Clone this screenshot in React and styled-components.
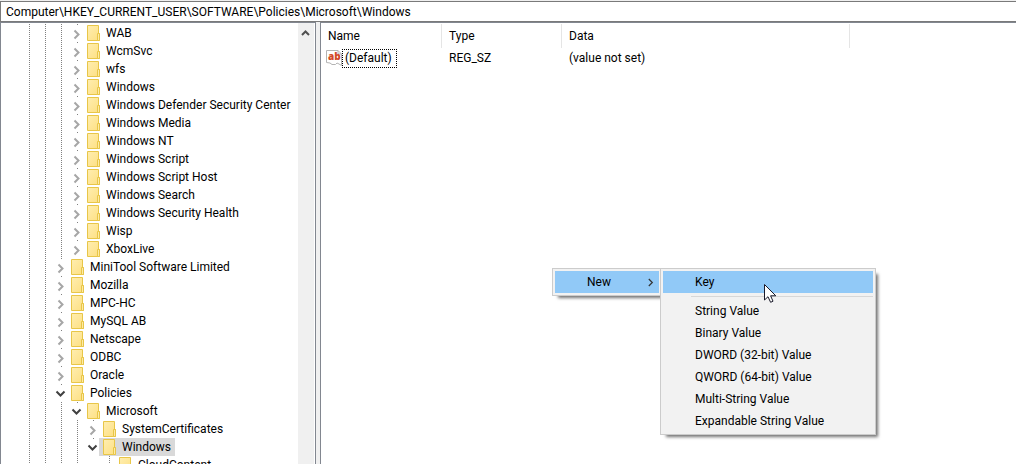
import React from "react";
import styled, { createGlobalStyle } from "styled-components";

const GlobalStyle = createGlobalStyle`
  * {
    box-sizing: border-box;
  }
  body {
    margin: 0;
    background: #fff;
    color: #000;
    font-family: Roboto, "Open Sans", sans-serif;
    font-size: 12px;
    line-height: 18px;
  }
  button,
  input {
    font: inherit;
    color: inherit;
  }
`;

const Window = styled.main`
  position: relative;
  display: flex;
  flex-direction: column;
  height: 100vh;
  overflow: hidden;
  background: #f0f0f0;
`;

const AddressBar = styled.input`
  flex: none;
  width: 100%;
  height: 21px;
  margin: 1px 0 0;
  padding: 0 5px;
  background: #fff;
  border: 1px solid #7a7a7a;
  border-right: 0;
  outline: none;
`;

const Panes = styled.div`
  display: flex;
  flex: 1;
  gap: 4px;
  min-height: 0;
`;

const TreePane = styled.nav`
  display: flex;
  flex: none;
  width: 316px;
  background: #fff;
  border: 1px solid #828790;
  border-bottom: 0;
`;

const Tree = styled.ul`
  flex: 1;
  min-width: 0;
  margin: 0;
  padding: 1px 0 0 20px;
  overflow: hidden;
  list-style: none;
`;

const TreeRow = styled.li`
  display: flex;
  height: 18px;
`;

const Guide = styled.span`
  flex: none;
  width: 16px;
  background: ${(props) =>
    props.$line
      ? "repeating-linear-gradient(#808080 0 1px, transparent 1px 2px) 8px 0 / 1px 100% no-repeat"
      : "none"};
`;

const Expander = styled.button`
  display: flex;
  flex: none;
  justify-content: center;
  width: 16px;
  height: 18px;
  padding: 0;
  border: 0;
  color: ${(props) => (props.$open ? "#404040" : "#a6a6a6")};
  background: linear-gradient(#808080, #808080) 8px 0 / 1px 1px no-repeat;
`;

const Folder = styled.a`
  display: flex;
  align-items: center;
  gap: 6px;
  margin-left: -2px;
  padding: 0 4px;
  color: inherit;
  text-decoration: none;
  white-space: nowrap;
  background: ${(props) => (props.$selected ? "#d9d9d9" : "transparent")};
`;

const ScrollBar = styled.div`
  flex: none;
  width: 17px;
  background: #f0f0f0;
  border-right: 1px solid #fff;
`;

const ScrollButton = styled.button`
  display: flex;
  align-items: center;
  justify-content: center;
  width: 15px;
  height: 19px;
  padding: 0;
  border: 0;
  background: none;
`;

const ListPane = styled.section`
  flex: 1;
  min-width: 0;
  background: #fff;
  border: 1px solid #828790;
  border-width: 1px 0 0 1px;
`;

const ValueTable = styled.table`
  margin-top: 1px;
  border-spacing: 0;
  table-layout: fixed;
  width: 529px;
`;

const HeadCell = styled.th`
  width: ${(props) => props.$width}px;
  height: 24px;
  padding: 0 0 0 7px;
  text-align: left;
  font-weight: 400;
  border-right: 1px solid #e5e5e5;
`;

const Cell = styled.td`
  height: 20px;
  padding: ${(props) => (props.$icon ? "0 0 0 5px" : "0 0 0 7px")};
`;

const ValueName = styled.div`
  display: flex;
  align-items: center;
`;

const FocusLabel = styled.span`
  padding: 0 4px 0 2px;
  line-height: 17px;
  border: 1px dotted #000;
`;

const Menu = styled.div`
  position: absolute;
  top: 268px;
  left: ${(props) => props.$left}px;
  width: ${(props) => props.$width}px;
  padding: 2px;
  background: #f2f2f2;
  border: 1px solid #ccc;
  box-shadow: 4px 4px 3px -2px rgba(0, 0, 0, 0.55);
`;

const MenuItem = styled.button`
  display: flex;
  align-items: center;
  justify-content: space-between;
  width: 100%;
  height: 22px;
  padding: 0 5px 0 32px;
  border: 0;
  text-align: left;
  white-space: nowrap;
  background: ${(props) => (props.$active ? "#91c9f7" : "transparent")};
`;

const Separator = styled.hr`
  height: 1px;
  margin: 3px 0 3px 28px;
  border: 0;
  background: #d7d7d7;
`;

const Cursor = styled.svg`
  position: absolute;
  top: 284px;
  left: 764px;
`;

const ROWS = [
  { name: "WAB", guides: [1, 1, 1] },
  { name: "WcmSvc", guides: [1, 1, 1] },
  { name: "wfs", guides: [1, 1, 1] },
  { name: "Windows", guides: [1, 1, 1] },
  { name: "Windows Defender Security Center", guides: [1, 1, 1] },
  { name: "Windows Media", guides: [1, 1, 1] },
  { name: "Windows NT", guides: [1, 1, 1] },
  { name: "Windows Script", guides: [1, 1, 1] },
  { name: "Windows Script Host", guides: [1, 1, 1] },
  { name: "Windows Search", guides: [1, 1, 1] },
  { name: "Windows Security Health", guides: [1, 1, 1] },
  { name: "Wisp", guides: [1, 1, 1] },
  { name: "XboxLive", guides: [1, 1, 1] },
  { name: "MiniTool Software Limited", guides: [1, 1] },
  { name: "Mozilla", guides: [1, 1] },
  { name: "MPC-HC", guides: [1, 1] },
  { name: "MySQL AB", guides: [1, 1] },
  { name: "Netscape", guides: [1, 1] },
  { name: "ODBC", guides: [1, 1] },
  { name: "Oracle", guides: [1, 1] },
  { name: "Policies", guides: [1, 1], open: true },
  { name: "Microsoft", guides: [1, 1, 1], open: true },
  { name: "SystemCertificates", guides: [1, 1, 1, 1] },
  { name: "Windows", guides: [1, 1, 1, 1], open: true, selected: true },
  { name: "CloudContent", guides: [1, 1, 1, 1, 0], leaf: true },
];

const VALUE_TYPES = [
  "String Value",
  "Binary Value",
  "DWORD (32-bit) Value",
  "QWORD (64-bit) Value",
  "Multi-String Value",
  "Expandable String Value",
];

const Chevron = ({ open }) => (
  <svg width="16" height="18" fill="none" stroke="currentColor" strokeWidth="2">
    <path d={open ? "M3.5 7.5L7.5 11.5L11.5 7.5" : "M5.5 6.5L9.5 10.5L5.5 14.5"} />
  </svg>
);

const FolderIcon = () => (
  <svg width="13" height="16">
    <defs>
      <linearGradient id="paper" x2="1" y2="1">
        <stop offset="0" stopColor="#ffeeb0" />
        <stop offset="1" stopColor="#fddf81" />
      </linearGradient>
    </defs>
    <path d="M.5 .5H11.5V8.5H12.5V15.5H.5Z" fill="url(#paper)" stroke="#e8c648" />
    <path d="M10.5 15.5V8.5H12.5V15.5Z" fill="#fdeaa5" stroke="#e8c648" />
  </svg>
);

const StringIcon = () => (
  <svg width="16" height="16">
    <path
      d="M.5 .5H12L15.5 4V15.5L13 14L11 13L9.5 14.5H6L4 13L.5 12.5Z"
      fill="#fff"
      stroke="#b4b4b4"
    />
    <path d="M12 .5V4H15.5" fill="none" stroke="#b4b4b4" />
    <text x="2" y="10" fontFamily="Open Sans" fontSize="10" fontWeight="800" fill="#d24726">
      ab
    </text>
  </svg>
);

const TreeItem = ({ row }) => (
  <TreeRow>
    {row.guides.map((line, i) => (
      <Guide key={i} $line={line} />
    ))}
    {row.leaf ? (
      <Guide $line />
    ) : (
      <Expander $open={row.open} aria-label={`Toggle ${row.name}`}>
        <Chevron open={row.open} />
      </Expander>
    )}
    <Folder href="#" $selected={row.selected}>
      <FolderIcon />
      {row.name}
    </Folder>
  </TreeRow>
);

const App = () => {
  return (
    <Window>
      <GlobalStyle />
      <AddressBar
        aria-label="Address"
        defaultValue="Computer\HKEY_CURRENT_USER\SOFTWARE\Policies\Microsoft\Windows"
      />
      <Panes>
        <TreePane>
          <Tree>
            {ROWS.map((row, i) => (
              <TreeItem key={i} row={row} />
            ))}
          </Tree>
          <ScrollBar>
            <ScrollButton aria-label="Scroll up">
              <svg width="9" height="7" fill="none" stroke="#505050" strokeWidth="2">
                <path d="M1 6L4.5 2.5L8 6" />
              </svg>
            </ScrollButton>
          </ScrollBar>
        </TreePane>
        <ListPane>
          <ValueTable>
            <thead>
              <tr>
                <HeadCell $width={121}>Name</HeadCell>
                <HeadCell $width={120}>Type</HeadCell>
                <HeadCell $width={288}>Data</HeadCell>
              </tr>
            </thead>
            <tbody>
              <tr>
                <Cell $icon>
                  <ValueName>
                    <StringIcon />
                    <FocusLabel>(Default)</FocusLabel>
                  </ValueName>
                </Cell>
                <Cell>REG_SZ</Cell>
                <Cell>(value not set)</Cell>
              </tr>
            </tbody>
          </ValueTable>
        </ListPane>
      </Panes>
      <Menu $left={552} $width={110}>
        <MenuItem $active>
          New
          <svg width="6" height="9" fill="none" stroke="#333" strokeWidth="1.2">
            <path d="M.8 1L4.3 4.5L.8 8" />
          </svg>
        </MenuItem>
      </Menu>
      <Menu $left={660} $width={216}>
        <MenuItem $active>Key</MenuItem>
        <Separator />
        {VALUE_TYPES.map((type) => (
          <MenuItem key={type}>{type}</MenuItem>
        ))}
      </Menu>
      <Cursor width="13" height="20">
        <path
          d="M.5 .5V16L4 12.7L6.6 18.3L9 17.2L6.6 11.8H11.8Z"
          fill="#fff"
          stroke="#1a1a2a"
        />
      </Cursor>
    </Window>
  );
};

export default App;
